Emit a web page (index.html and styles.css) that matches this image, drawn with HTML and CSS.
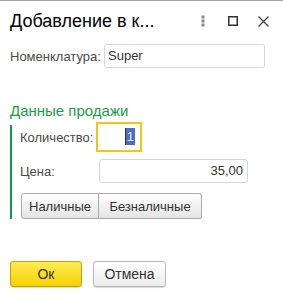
FILE: index.html
```html
<!DOCTYPE html>
<html lang="ru">

<head>
    <meta charset="UTF-8">
    <meta name="viewport" content="width=device-width, initial-scale=1.0">
    <title>Добавление в корзину</title>
    <link rel="stylesheet" href="styles.css">
</head>

<body>
    <div class="window">
        <div class="header">
            <div class="title">Добавление в к...</div>
            <div class="header-icons">
                <span class="icon-btn">
                    <svg width="4" height="12" viewBox="0 0 4 12">
                        <rect x="0.5" y="0.5" width="3" height="3" fill="#8a8a8a" />
                        <rect x="0.5" y="4.5" width="3" height="3" fill="#8a8a8a" />
                        <rect x="0.5" y="8.5" width="3" height="3" fill="#8a8a8a" />
                    </svg>
                </span>
                <span class="icon-btn">
                    <svg width="10" height="10" viewBox="0 0 10 10">
                        <rect x="0.75" y="0.75" width="8.5" height="8.5" fill="none" stroke="#333" stroke-width="1.5" />
                    </svg>
                </span>
                <span class="icon-btn">
                    <svg width="11" height="11" viewBox="0 0 11 11">
                        <path d="M0.5 0.5 L10.5 10.5 M10.5 0.5 L0.5 10.5" stroke="#444" stroke-width="1.3" />
                    </svg>
                </span>
            </div>
        </div>

        <div class="nom-row">
            <label class="nom-label">Номенклатура:</label>
            <div class="field nom-field">Super</div>
        </div>

        <div class="group-title">Данные продажи</div>
        <div class="group">
            <div class="row">
                <label class="row-label">Количество:</label>
                <div class="qty-field"><span class="selected">1</span></div>
            </div>
            <div class="row">
                <label class="row-label">Цена:</label>
                <div class="field price-field">35,00</div>
            </div>
            <div class="pay-buttons">
                <button class="pay-btn cash">Наличные</button>
                <button class="pay-btn card">Безналичные</button>
            </div>
        </div>

        <div class="footer">
            <button class="btn btn-ok">Ок</button>
            <button class="btn btn-cancel">Отмена</button>
        </div>
    </div>
</body>

</html>
```

FILE: styles.css
```css
/* General */
body {
    margin: 0;
    padding: 0;
    background: #fff;
    font-family: "Liberation Sans", Arial, sans-serif;
    color: #4a4a4a;
}

.window {
    border-top: 1px solid #a4a4a4;
    width: 283px;
    height: 296px;
}

/* Header */
.header {
    display: flex;
    align-items: center;
    justify-content: space-between;
    height: 40px;
}

.title {
    padding-left: 10px;
    font-size: 18px;
    color: #000;
}

.header-icons {
    display: flex;
    margin-right: 5px;
}

.icon-btn {
    width: 30px;
    height: 20px;
    display: flex;
    align-items: center;
    justify-content: center;
}

/* Fields */
.field {
    box-sizing: border-box;
    height: 24px;
    border: 1px solid #d6d6d6;
    border-radius: 3px;
    background: #fff;
    font-size: 13px;
    color: #333;
    line-height: 22px;
    padding: 0 4px 0 3px;
}

.nom-row {
    display: flex;
    align-items: center;
    margin-top: 3px;
    padding-left: 10px;
}

.nom-label {
    width: 94px;
    font-size: 13px;
}

.nom-field {
    width: 161px;
}

/* Group */
.group-title {
    margin-top: 34px;
    padding-left: 10px;
    font-size: 15px;
    line-height: 18px;
    color: #1d9a4b;
}

.group {
    margin: 5px 0 0 10px;
    padding-left: 8px;
    border-left: 2px solid #0f9a48;
    display: flex;
    flex-direction: column;
    gap: 10px;
}

.row {
    display: flex;
    align-items: center;
}

.row-label {
    width: 79px;
    font-size: 13px;
}

.qty-field {
    box-sizing: border-box;
    width: 46px;
    height: 30px;
    margin: -3px 0 -3px -3px;
    border: 2px solid #f3c31c;
    background: #fff;
    text-align: right;
    font-size: 13px;
    line-height: 26px;
    padding-right: 5px;
}

.selected {
    background: #4f6cc4;
    color: #e8ecff;
    padding: 1px 1px;
    border-left: 1px solid #333;
}

.price-field {
    width: 149px;
    text-align: right;
}

.pay-buttons {
    display: flex;
    margin-left: 1px;
}

.pay-btn {
    height: 26px;
    margin: 0;
    border: 1px solid #a9a9a9;
    background: linear-gradient(#ffffff, #e4e4e4);
    font-family: "Liberation Sans", Arial, sans-serif;
    font-size: 13px;
    color: #333;
    padding: 0;
    cursor: pointer;
}

.cash {
    width: 78px;
    border-radius: 3px 0 0 3px;
}

.card {
    width: 103px;
    border-left: none;
    border-radius: 0 3px 3px 0;
}

/* Footer */
.footer {
    display: flex;
    gap: 11px;
    margin-top: 42px;
    padding-left: 10px;
}

.btn {
    height: 26px;
    border-radius: 3px;
    font-family: "Liberation Sans", Arial, sans-serif;
    font-size: 14px;
    color: #333;
    padding: 0;
    cursor: pointer;
    box-shadow: 0 1px 1px rgba(0, 0, 0, 0.15);
}

.btn-ok {
    width: 72px;
    border: 1px solid #c4a300;
    background: linear-gradient(#ffeb55, #f6d200);
}

.btn-cancel {
    width: 73px;
    border: 1px solid #b8b8b8;
    background: linear-gradient(#ffffff, #ececec);
}
```
